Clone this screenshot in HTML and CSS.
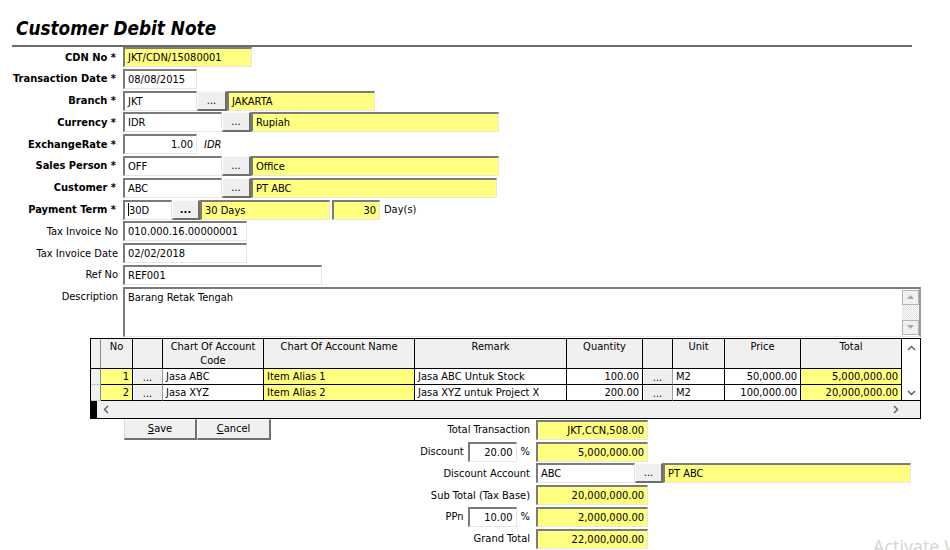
FILE: index.html
```html
<!DOCTYPE html>
<html>
<head>
<meta charset="utf-8">
<title>Customer Debit Note</title>
<link rel="stylesheet" href="styles.css">
</head>
<body>
<h1 class="title">Customer Debit Note</h1>
<div class="rule"></div>

<div class="form">
  <div class="row"><span class="lbl req">CDN No *</span><div class="fld y w129">JKT/CDN/15080001</div></div>
  <div class="row"><span class="lbl req">Transaction Date *</span><div class="fld w74">08/08/2015</div></div>
  <div class="row"><span class="lbl req">Branch *</span><div class="fld w74">JKT</div><div class="btn w30">...</div><div class="fld y w148">JAKARTA</div></div>
  <div class="row"><span class="lbl req">Currency *</span><div class="fld w99">IDR</div><div class="btn w29">...</div><div class="fld y w248">Rupiah</div></div>
  <div class="row"><span class="lbl req">ExchangeRate *</span><div class="fld w74 num">1.00</div><span class="unit">IDR</span></div>
  <div class="row"><span class="lbl req">Sales Person *</span><div class="fld w99">OFF</div><div class="btn w29">...</div><div class="fld y w248">Office</div></div>
  <div class="row"><span class="lbl req">Customer *</span><div class="fld w99">ABC</div><div class="btn w29">...</div><div class="fld y w246">PT ABC</div></div>
  <div class="row"><span class="lbl req">Payment Term *</span><div class="fld w49"><span class="caret"></span>30D</div><div class="btn w28 bold">...</div><div class="fld y w130">30 Days</div><div class="fld y w48 num gapl">30</div><span class="days">Day(s)</span></div>
  <div class="row"><span class="lbl">Tax Invoice No</span><div class="fld w124">010.000.16.00000001</div></div>
  <div class="row"><span class="lbl">Tax Invoice Date</span><div class="fld w124">02/02/2018</div></div>
  <div class="row"><span class="lbl">Ref No</span><div class="fld w199">REF001</div></div>
  <div class="row desc-row"><span class="lbl top">Description</span>
    <div class="memo">
      <div class="memo-text">Barang Retak Tengah</div>
      <div class="memo-scroll">
        <div class="sb-btn"><svg width="7" height="4" viewBox="0 0 7 4"><polygon points="0,4 3.5,0 7,4" fill="#a8a8a8"/></svg></div>
        <div class="sb-track"></div>
        <div class="sb-btn"><svg width="7" height="4" viewBox="0 0 7 4"><polygon points="0,0 3.5,4 7,0" fill="#a8a8a8"/></svg></div>
      </div>
    </div>
  </div>
</div>

<div class="grid">
  <div class="c ind h"></div>
  <div class="c h">No</div>
  <div class="c h"></div>
  <div class="c h">Chart Of Account Code</div>
  <div class="c h">Chart Of Account Name</div>
  <div class="c h">Remark</div>
  <div class="c h">Quantity</div>
  <div class="c h"></div>
  <div class="c h">Unit</div>
  <div class="c h">Price</div>
  <div class="c h">Total</div>
  <div class="vscroll">
    <svg width="9" height="6" viewBox="0 0 9 6"><polyline points="1,5 4.5,1.5 8,5" fill="none" stroke="#5a5a5a" stroke-width="1.4"/></svg>
    <svg width="9" height="6" viewBox="0 0 9 6"><polyline points="1,1 4.5,4.5 8,1" fill="none" stroke="#5a5a5a" stroke-width="1.4"/></svg>
  </div>

  <div class="c ind"></div>
  <div class="c y r">1</div>
  <div class="c gb">...</div>
  <div class="c">Jasa ABC</div>
  <div class="c y">Item Alias 1</div>
  <div class="c">Jasa ABC Untuk Stock</div>
  <div class="c r">100.00</div>
  <div class="c gb">...</div>
  <div class="c">M2</div>
  <div class="c r">50,000.00</div>
  <div class="c y r">5,000,000.00</div>

  <div class="c ind"></div>
  <div class="c y r">2</div>
  <div class="c gb">...</div>
  <div class="c">Jasa XYZ</div>
  <div class="c y">Item Alias 2</div>
  <div class="c">Jasa XYZ untuk Project X</div>
  <div class="c r">200.00</div>
  <div class="c gb">...</div>
  <div class="c">M2</div>
  <div class="c r">100,000.00</div>
  <div class="c y r">20,000,000.00</div>

  <div class="hscroll">
    <span class="hs-bar"></span>
    <svg class="hs-left" width="6" height="9" viewBox="0 0 6 9"><polyline points="5,1 1.5,4.5 5,8" fill="none" stroke="#5a5a5a" stroke-width="1.4"/></svg>
    <svg class="hs-right" width="6" height="9" viewBox="0 0 6 9"><polyline points="1,1 4.5,4.5 1,8" fill="none" stroke="#5a5a5a" stroke-width="1.4"/></svg>
  </div>
</div>

<div class="bottom">
  <div class="actions">
    <div class="abtn"><u>S</u>ave</div>
    <div class="abtn wide"><u>C</u>ancel</div>
  </div>
  <div class="totals">
    <div class="trow"><span class="tlabel">Total Transaction</span><div class="fld y w112 num">JKT,CCN,508.00</div></div>
    <div class="trow"><span class="tlabel">Discount<span class="fld w49 num pct">20.00</span>%</span><div class="fld y w112 num">5,000,000.00</div></div>
    <div class="trow"><span class="tlabel">Discount Account</span><div class="fld w99">ABC</div><div class="btn w28">...</div><div class="fld y w248">PT ABC</div></div>
    <div class="trow"><span class="tlabel">Sub Total (Tax Base)</span><div class="fld y w112 num">20,000,000.00</div></div>
    <div class="trow"><span class="tlabel">PPn<span class="fld w49 num pct">10.00</span>%</span><div class="fld y w112 num">2,000,000.00</div></div>
    <div class="trow"><span class="tlabel">Grand Total</span><div class="fld y w112 num">22,000,000.00</div></div>
  </div>
</div>

<div class="watermark">Activate Windows</div>
</body>
</html>
```

FILE: styles.css
```css
* { box-sizing: border-box; }
html, body { margin: 0; padding: 0; overflow: hidden; background: #fff; }
body {
  width: 950px;
  height: 550px;
  position: relative;
  font-family: "DejaVu Sans Condensed", "DejaVu Sans", sans-serif;
  font-size: 11px;
  color: #000;
}

.title {
  margin: 0;
  padding: 17px 0 0 16px;
  height: 45px;
  font-size: 18.8px;
  line-height: 24px;
  font-weight: bold;
  font-style: italic;
}
.rule { margin-left: 12px; width: 900px; height: 2px; background: #6b6b6b; }

.form { display: flex; flex-direction: column; gap: 1.8px; }
.row { display: flex; align-items: center; height: 20px; }
.lbl { width: 118px; margin-right: 5px; text-align: right; white-space: nowrap; }
.lbl.req { font-weight: bold; padding-right: 2px; }
.lbl.top { align-self: flex-start; padding-top: 3px; }

.fld {
  height: 20px;
  border-style: solid;
  border-width: 2px 1px 1px 2px;
  border-color: #7b7b7b #e6e6e6 #e6e6e6 #7b7b7b;
  background: #fff;
  padding: 0 3px;
  line-height: 17px;
  white-space: nowrap;
  overflow: hidden;
  flex: none;
}
.fld.y { background: #ffff80; }
.num { text-align: right; }
.btn {
  height: 20px;
  flex: none;
  background: #efefef;
  border-style: solid;
  border-width: 1px 2px 2px 1px;
  border-color: #fbfbfb #6e6e6e #6e6e6e #fbfbfb;
  text-align: center;
  line-height: 17px;
}
.bold { font-weight: bold; }
.gapl { margin-left: 2px; }
.caret { display: inline-block; width: 1px; height: 13px; background: #000; vertical-align: -2px; }
.unit { font-style: italic; margin-left: 7px; }
.days { margin-left: 4px; }

.w28 { width: 28px; }
.w29 { width: 29px; }
.w30 { width: 30px; }
.w48 { width: 48px; }
.w49 { width: 49px; }
.w74 { width: 74px; }
.w99 { width: 99px; }
.w112 { width: 112px; }
.w124 { width: 124px; }
.w129 { width: 129px; }
.w130 { width: 130px; }
.w148 { width: 148px; }
.w199 { width: 199px; }
.w246 { width: 246px; }
.w248 { width: 248px; }

.desc-row { height: 50px; align-items: stretch; }
.memo {
  width: 798px;
  height: 50px;
  display: flex;
  border-style: solid;
  border-width: 2px 2px 1px 2px;
  border-color: #7b7b7b #9a9a9a #e6e6e6 #7b7b7b;
  background: #fff;
}
.memo-text { flex: 1; padding: 2px 3px; line-height: 14px; }
.memo-scroll { width: 17px; display: flex; flex-direction: column; padding: 1px 0; }
.sb-btn {
  height: 15px;
  background: #f0f0f0;
  border: 1px solid #b4b4b4;
  display: flex;
  align-items: center;
  justify-content: center;
}
.sb-track {
  flex: 1;
  background: repeating-conic-gradient(#e2e2e2 0 25%, #fafafa 0 50%) 0 0 / 2px 2px;
}

.grid {
  margin-top: 1px;
  margin-left: 90px;
  width: 831px;
  border: 1px solid #000;
  display: grid;
  grid-template-columns: 10px 32px 30px 101px 151px 152px 76px 30px 52px 76px 101px 18px;
  grid-template-rows: 30px 16px 16px 17px;
}
.c {
  border-right: 1px solid #000;
  border-bottom: 1px solid #000;
  padding: 0 3px;
  line-height: 15px;
  white-space: nowrap;
  overflow: hidden;
  background: #fff;
}
.c.h {
  background: #f0f0f0;
  text-align: center;
  white-space: normal;
  line-height: 14px;
  padding: 1px 2px 0;
}
.c.ind { background: #f0f0f0; border-right-color: #8a8a8a; border-bottom-color: #c8c8c8; }
.c.h.ind { border-bottom-color: #000; }
.c.y { background: #ffff80; }
.c.r { text-align: right; }
.c.gb {
  background: #eeeeee;
  text-align: center;
  line-height: 17px;
  border-right: 1px solid #9a9a9a;
  box-shadow: inset 1px 1px 0 #fff;
}
.vscroll {
  grid-column: 12;
  grid-row: 1 / span 3;
  background: #fff;
  display: flex;
  flex-direction: column;
  justify-content: space-between;
  align-items: center;
  padding: 6px 0 4px;
  border-bottom: 1px solid #000;
}
.hscroll {
  grid-column: 1 / -1;
  grid-row: 4;
  background: #f0f0f0;
  display: flex;
  align-items: center;
}
.hs-bar { width: 6px; height: 17px; background: #000; }
.hs-left { margin-left: 6px; }
.hs-right { margin-left: auto; margin-right: 21px; }

.bottom { display: flex; align-items: flex-start; }
.actions { display: flex; margin-left: 124px; }
.abtn {
  width: 73px;
  height: 21px;
  background: #f0f0f0;
  border-style: solid;
  border-width: 1px 2px 2px 1px;
  border-color: #fafafa #707070 #707070 #d8d8d8;
  text-align: center;
  line-height: 17px;
}
.abtn.wide { width: 74px; border-left-color: #fafafa; }

.totals { margin-left: 109px; margin-top: 1px; display: flex; flex-direction: column; gap: 1.8px; }
.trow { display: flex; align-items: center; height: 20px; }
.tlabel {
  width: 150px;
  margin-right: 6px;
  display: flex;
  justify-content: flex-end;
  align-items: center;
  white-space: nowrap;
}
.pct { margin: 0 4px; }

.watermark {
  position: absolute;
  left: 873px;
  top: 534px;
  font-family: "Open Sans", "Noto Sans", sans-serif;
  font-size: 18px;
  line-height: 24px;
  color: #d4d4d4;
  white-space: nowrap;
}
```
